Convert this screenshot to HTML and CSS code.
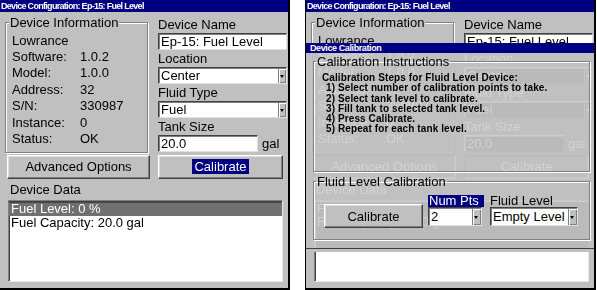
FILE: index.html
```html
<!DOCTYPE html>
<html lang="en">
<head>
    <meta charset="UTF-8">
    <meta name="viewport" content="width=device-width, initial-scale=1.0">
    <link rel="stylesheet" href="styles.css">
    <title>Device Configuration</title>
</head>
<body>
    <div class="shots">
        <div class="win">
            <div class="titlebar">Device Configuration: Ep-15: Fuel Level</div>
            <div class="content">
                <div class="top">
                    <fieldset class="group info">
                        <legend>Device Information</legend>
                        <div class="info-grid">
                            <span class="brand">Lowrance</span>
                            <span>Software:</span><span>1.0.2</span>
                            <span>Model:</span><span>1.0.0</span>
                            <span>Address:</span><span>32</span>
                            <span>S/N:</span><span>330987</span>
                            <span>Instance:</span><span>0</span>
                            <span>Status:</span><span>OK</span>
                        </div>
                    </fieldset>
                    <div class="fields">
                        <div class="label">Device Name</div>
                        <div class="input">Ep-15: Fuel Level</div>
                        <div class="label">Location</div>
                        <div class="input select">Center<span class="arrow"></span></div>
                        <div class="label">Fluid Type</div>
                        <div class="input select">Fuel<span class="arrow"></span></div>
                        <div class="label">Tank Size</div>
                        <div class="unit">
                            <div class="input short">20.0</div>
                            <span>gal</span>
                        </div>
                    </div>
                </div>
                <div class="btnrow">
                    <div class="btn adv">Advanced Options</div>
                    <div class="btn cal"><span class="focus">Calibrate</span></div>
                </div>
                <div class="label data">Device Data</div>
                <div class="list">
                    <div class="item sel">Fuel Level: 0 %</div>
                    <div class="item">Fuel Capacity: 20.0 gal</div>
                </div>
            </div>
        </div>

        <div class="win second">
            <div class="titlebar">Device Configuration: Ep-15: Fuel Level</div>
            <div class="content">
                <div class="top">
                    <fieldset class="group info">
                        <legend>Device Information</legend>
                        <div class="info-grid">
                            <span class="brand">Lowrance</span>
                            <span>Software:</span><span>1.0.2</span>
                            <span>Model:</span><span>1.0.0</span>
                            <span>Address:</span><span>32</span>
                            <span>S/N:</span><span>330987</span>
                            <span>Instance:</span><span>0</span>
                            <span>Status:</span><span>OK</span>
                        </div>
                    </fieldset>
                    <div class="fields">
                        <div class="label">Device Name</div>
                        <div class="input">Ep-15: Fuel Level</div>
                        <div class="label">Location</div>
                        <div class="input select">Center<span class="arrow"></span></div>
                        <div class="label">Fluid Type</div>
                        <div class="input select">Fuel<span class="arrow"></span></div>
                        <div class="label">Tank Size</div>
                        <div class="unit">
                            <div class="input short">20.0</div>
                            <span>gal</span>
                        </div>
                    </div>
                </div>
                <div class="btnrow">
                    <div class="btn adv">Advanced Options</div>
                    <div class="btn cal">Calibrate</div>
                </div>
                <div class="label data">Device Data</div>
                <div class="list">
                    <div class="item">Fuel Level: 0 %</div>
                    <div class="item">Fuel Capacity: 20.0 gal</div>
                </div>
            </div>

            <div class="dialog">
                <div class="titlebar dtitle">Device Calibration</div>
                <div class="dbody">
                    <fieldset class="group steps">
                        <legend>Calibration Instructions</legend>
                        <div class="step head">Calibration Steps for Fluid Level Device:</div>
                        <div class="step">1) Select number of calibration points to take.</div>
                        <div class="step">2) Select tank level to calibrate.</div>
                        <div class="step">3) Fill tank to selected tank level.</div>
                        <div class="step">4) Press Calibrate.</div>
                        <div class="step">5) Repeat for each tank level.</div>
                    </fieldset>
                    <fieldset class="group level">
                        <legend>Fluid Level Calibration</legend>
                        <div class="level-row">
                            <div class="btn dcal">Calibrate</div>
                            <div class="pick pts">
                                <div class="pick-label focus">Num Pts</div>
                                <div class="input select tall">2<span class="arrow"></span></div>
                            </div>
                            <div class="pick lvl">
                                <div class="pick-label">Fluid Level</div>
                                <div class="input select tall">Empty Level<span class="arrow"></span></div>
                            </div>
                        </div>
                    </fieldset>
                </div>
            </div>
        </div>
    </div>
</body>
</html>
```

FILE: styles.css
```css
:root {
    --font: "Liberation Sans", Arial, sans-serif;
    --panel: #c0c0c0;
    --navy: #000080;
    --shadow: #808080;
    --dark: #404040;
    --light: #ffffff;
}

body {
    margin: 0;
    background: #fff;
    font-family: var(--font);
    font-size: 13px;
    color: #000;
}

.shots {
    display: flex;
    gap: 15px;
}

.win {
    position: relative;
    width: 288px;
    height: 288px;
    background: var(--panel);
    border-right: 2px solid #000;
    border-bottom: 2px solid #000;
    overflow: hidden;
}

.win.second {
    border-left: 1px solid #000;
}

.titlebar {
    height: 12px;
    background: var(--navy);
    color: #fff;
    font: bold 9px/12px var(--font);
    letter-spacing: -0.7px;
    padding-left: 1px;
    white-space: nowrap;
    overflow: hidden;
}

.content {
    padding: 3px 1px 0 5px;
}

.top {
    display: grid;
    grid-template-columns: 143px 1fr;
    column-gap: 10px;
}

.group {
    margin: 0;
    padding: 2px 6px 5px 6px;
    border: 1px solid var(--shadow);
    box-shadow: inset 1px 1px 0 var(--light), 1px 1px 0 var(--light);
    min-width: 0;
}

.group legend {
    padding: 0 1px;
    margin-left: -3px;
    line-height: 15px;
    background: var(--panel);
}

.info-grid {
    display: grid;
    grid-template-columns: 68px 1fr;
    grid-auto-rows: 16.4px;
    align-items: center;
}

.brand {
    grid-column: 1 / 3;
}

.fields {
    margin-top: 1px;
}

.label {
    height: 17px;
    line-height: 17px;
    white-space: nowrap;
}

.input {
    position: relative;
    box-sizing: border-box;
    height: 17px;
    line-height: 15px;
    padding-left: 2px;
    background: #fff;
    border: 1px solid;
    border-color: var(--dark) #e0e0e0 #e0e0e0 var(--dark);
    box-shadow: inset 1px 1px 0 var(--shadow);
    white-space: nowrap;
}

.arrow {
    position: absolute;
    top: 1px;
    right: 0;
    bottom: 0;
    width: 7px;
    background: var(--panel);
    border-left: 1px solid var(--shadow);
    box-shadow: inset 1px 1px 0 #fff, inset -1px -1px 0 var(--shadow);
}

.arrow::after {
    content: "";
    position: absolute;
    left: 1px;
    top: 50%;
    margin-top: -1px;
    border-left: 2.5px solid transparent;
    border-right: 2.5px solid transparent;
    border-top: 3px solid #000;
}

.unit {
    display: flex;
    align-items: center;
    gap: 4px;
}

.input.short {
    width: 100px;
}

.btnrow {
    display: flex;
    gap: 8px;
    margin-top: 2px;
    padding-left: 2px;
}

.btn {
    box-sizing: border-box;
    height: 24px;
    display: flex;
    align-items: center;
    justify-content: center;
    background: var(--panel);
    border: 1px solid;
    border-color: var(--light) var(--dark) var(--dark) var(--light);
    box-shadow: inset -1px -1px 0 var(--shadow), inset 1px 1px 0 #dfdfdf;
    white-space: nowrap;
}

.btn.adv {
    width: 143px;
}

.btn.cal {
    width: 125px;
}

.focus {
    background: var(--navy);
    color: #fff;
    padding: 0 2px;
    line-height: 15px;
}

.label.data {
    margin-top: 3px;
    height: 16px;
    line-height: 16px;
    padding-left: 5px;
}

.list {
    box-sizing: border-box;
    width: 275px;
    height: 82px;
    margin: 2px 0 0 3px;
    padding-top: 1px;
    background: #fff;
    border: 1px solid;
    border-color: var(--shadow) #e8e8e8 #e8e8e8 var(--shadow);
    box-shadow: inset 1px 1px 0 var(--dark);
}

.item {
    height: 13px;
    line-height: 13px;
    padding-left: 2px;
    white-space: nowrap;
}

.item.sel {
    background: #707070;
    color: #fff;
    border-top: 1px solid #4a4a4a;
    height: 13px;
    line-height: 12px;
}

/* calibration dialog drawn over the second window; the window shows through faintly */
.dialog {
    position: absolute;
    left: 0;
    top: 43px;
    width: 288px;
    height: 209px;
    display: flex;
    flex-direction: column;
    box-sizing: border-box;
    border-bottom: 3px solid var(--panel);
    background: rgba(206, 206, 206, 0.9);
    backdrop-filter: invert(1);
}

.dtitle {
    height: 10px;
    line-height: 10px;
    letter-spacing: -0.4px;
    padding-left: 4px;
}

.dbody {
    flex: 1;
    padding: 1px 4px 0 7px;
    border-bottom: 1px solid var(--dark);
}

.steps {
    padding: 4px 4px 36px 8px;
}

.steps legend {
    margin-left: -6px;
    background: transparent;
}

.step {
    font-size: 10px;
    font-weight: bold;
    line-height: 10.3px;
    letter-spacing: 0.1px;
    padding-left: 4px;
    white-space: nowrap;
}

.step.head {
    padding-left: 0;
}

.level {
    margin-top: 2.5px;
    padding: 6px 0 13px 10px;
}

.level legend {
    margin-left: -8px;
    background: transparent;
}

.level-row {
    display: flex;
    align-items: flex-end;
}

.btn.dcal {
    width: 99px;
    margin-bottom: -2px;
}

.pick {
    display: flex;
    flex-direction: column;
}

.pick.pts {
    width: 56px;
    margin-left: 5px;
}

.pick.lvl {
    width: 88px;
    margin-left: 6px;
}

.pick-label {
    height: 12px;
    line-height: 12px;
    white-space: nowrap;
}

.pick-label.focus {
    padding: 0 0 0 1px;
}

.input.tall {
    height: 19px;
    line-height: 17px;
}

.pts .input.tall {
    width: 54px;
}

.input.tall .arrow {
    width: 8px;
}
```
